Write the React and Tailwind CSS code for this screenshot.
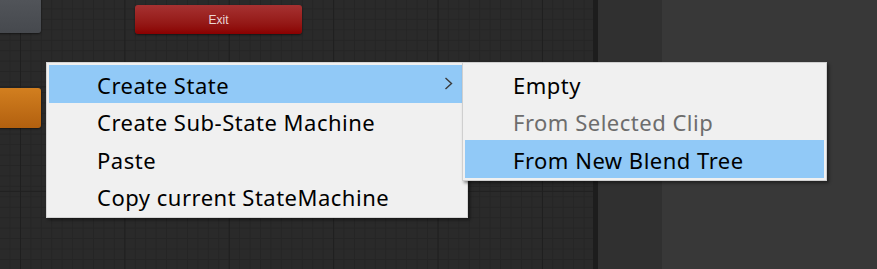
const MAIN_ITEMS = [
  { label: 'Create State', active: true, submenu: true },
  { label: 'Create Sub-State Machine' },
  { label: 'Paste' },
  { label: 'Copy current StateMachine' },
]

const SUB_ITEMS = [
  { label: 'Empty' },
  { label: 'From Selected Clip', disabled: true },
  { label: 'From New Blend Tree', active: true },
]

function Chevron() {
  return (
    <svg width="9" height="13" viewBox="0 0 9 13" className="mr-[8px] -mt-[2px]">
      <polyline points="1.5,1 7.5,6.5 1.5,12" fill="none" stroke="#3a3a3a" strokeWidth="1.4" />
    </svg>
  )
}

function MenuRow({ item }) {
  return (
    <div
      className={`flex items-center h-[37.5px] pt-[2px] pl-[48px] pr-1 ${item.active ? 'bg-[#91c9f7]' : ''} ${
        item.disabled ? 'text-[#6d6d6d]' : 'text-black'
      }`}
    >
      <span className="flex-1 whitespace-nowrap">{item.label}</span>
      {item.submenu && <Chevron />}
    </div>
  )
}

export default function App() {
  return (
    <div className="relative w-[877px] h-[269px] overflow-hidden flex bg-[#383838] font-['Noto_Sans',sans-serif]">
      {/* graph canvas */}
      <div className="relative w-[593px] h-full bg-[#2a2a2a] bg-[image:linear-gradient(to_right,#1f1f1f_1px,transparent_1px),linear-gradient(to_bottom,#1f1f1f_1px,transparent_1px),linear-gradient(to_right,#252525_1px,transparent_1px),linear-gradient(to_bottom,#252525_1px,transparent_1px)] bg-[size:104.4px_104.4px,104.4px_104.4px,10.44px_10.44px,10.44px_10.44px] bg-[position:20px_-18px,20px_-18px,9.5px_-2px,9.5px_-2px]">
        {/* nodes */}
        <div className="absolute left-[-10px] top-[-6px] w-[51px] h-[39px] rounded-[3px] bg-gradient-to-b from-[#53565b] to-[#46494e] shadow-[0_1px_2px_rgba(0,0,0,0.5)]" />
        <div className="absolute left-[-10px] top-[88px] w-[51px] h-[40px] rounded-[3px] bg-gradient-to-b from-[#d27f1f] to-[#b2600f] shadow-[0_1px_2px_rgba(0,0,0,0.5)]" />
        <div className="absolute left-[135px] top-[5px] w-[167px] h-[29px] rounded-[3px] bg-gradient-to-b from-[#a63131] to-[#8a0000] flex items-center justify-center text-[12px] text-[#ead6d6] font-['Liberation_Sans',sans-serif] shadow-[0_1px_2px_rgba(0,0,0,0.5)]">
          Exit
        </div>
      </div>
      <div className="w-[5px] h-full bg-[#1d1d1d]" />
      <div className="w-[64px] h-full bg-[#303030]" />
      <div className="flex-1 h-full bg-[#383838]" />

      {/* context menu */}
      <div className="absolute left-[46px] top-[62px] w-[422px] p-[2px] border border-[#d4d4d4] bg-[#f0f0f0] text-[22px] leading-none tracking-[0.5px] shadow-[2px_2px_3px_rgba(0,0,0,0.45)]">
        {MAIN_ITEMS.map((item) => (
          <MenuRow key={item.label} item={item} />
        ))}
      </div>

      {/* submenu */}
      <div className="absolute left-[462px] top-[62px] w-[365px] p-[2px] border border-[#cfcfcf] bg-[#f0f0f0] text-[22px] leading-none tracking-[0.5px] shadow-[2px_2px_3px_rgba(0,0,0,0.45)]">
        {SUB_ITEMS.map((item) => (
          <MenuRow key={item.label} item={item} />
        ))}
      </div>
    </div>
  )
}
